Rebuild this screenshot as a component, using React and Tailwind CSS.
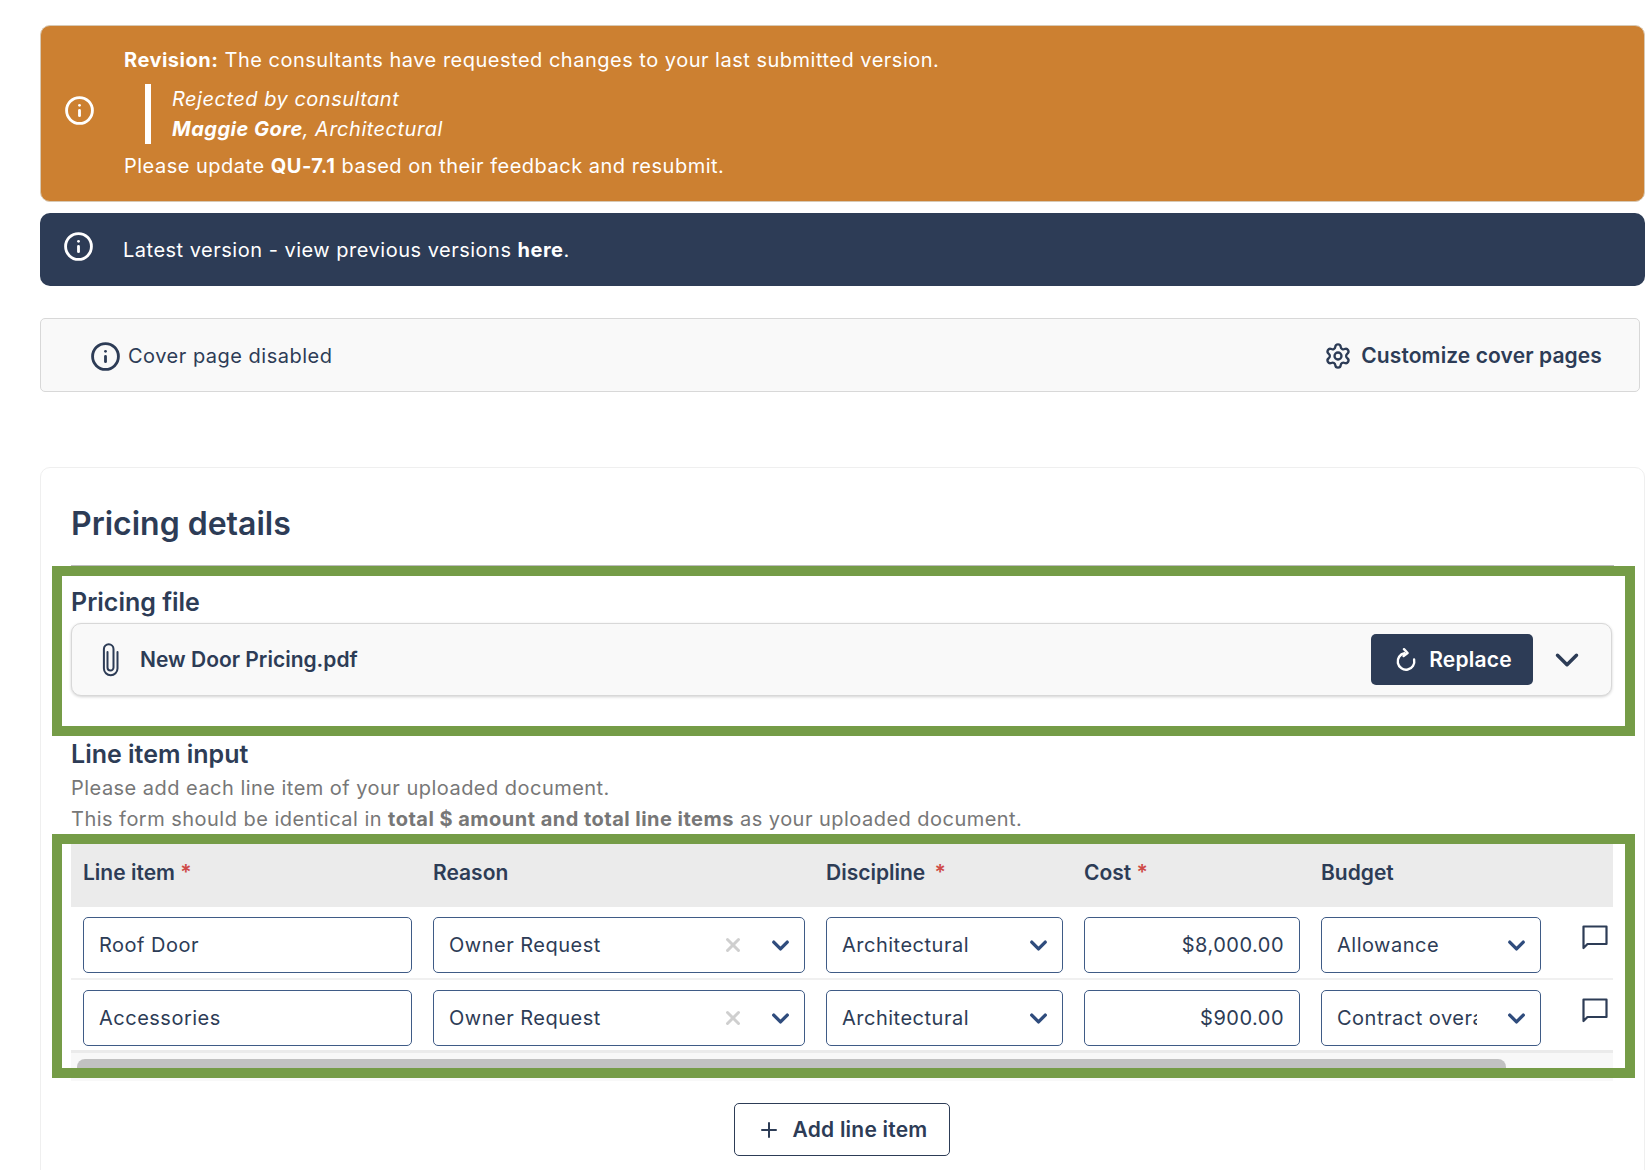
import { ChevronDown, Info, Plus, Settings, X } from "lucide-react";

const columns = "grid grid-cols-[329px_372px_237px_216px_220px_1fr] gap-x-[21px] pl-3";

const rows = [
  { item: "Roof Door", reason: "Owner Request", discipline: "Architectural", cost: "$8,000.00", budget: "Allowance" },
  { item: "Accessories", reason: "Owner Request", discipline: "Architectural", cost: "$900.00", budget: "Contract overall" },
];

const fieldClass =
  "flex h-14 items-center rounded-[5px] border border-[#3f5b86] bg-white pl-[15px] text-[20px] tracking-[0.025em] text-[#2d3c56]";

const Star = () => <span className="text-[#cf4a47]">*</span>;

const PaperClip = () => (
  <svg width="19" height="34" viewBox="0 0 19 34" fill="none" stroke="#2d3c56" strokeWidth="2" strokeLinecap="round">
    <path d="M6.5 9v15.5a3 3 0 0 0 6 0V6a4.8 4.8 0 0 0-9.6 0v19.5a6.8 6.8 0 0 0 13.6 0V9" />
  </svg>
);

const ReplaceIcon = () => (
  <svg width="22" height="24" viewBox="0 0 22 24" fill="none" stroke="#fff" strokeWidth="2.4" strokeLinecap="round" strokeLinejoin="round">
    <path d="M9.5 5.2a8.3 8.3 0 1 0 9.6 6.3" />
    <path d="M9 1.2l3.6 3.8L8.6 8" />
  </svg>
);

const CommentIcon = () => (
  <svg width="26" height="25" viewBox="0 0 26 25" fill="none" stroke="#2d3c56" strokeWidth="2.2">
    <path d="M1.5 1.5h23v17.5H5.5l-4 4z" strokeLinejoin="round" />
  </svg>
);

const Select = ({ value, clear, clip }) => (
  <div className={fieldClass}>
    <div className="grow">
      <div className={clip ? "w-[140px] overflow-hidden whitespace-nowrap" : "whitespace-nowrap"}>{value}</div>
    </div>
    {clear && <X size={22} strokeWidth={3.2} className="mr-[23px] text-[#cfcfcf]" />}
    <ChevronDown size={27} strokeWidth={3} className="mr-[10px] shrink-0 text-[#2f4c7d]" />
  </div>
);

export default function App() {
  return (
    <div className="h-[1170px] overflow-hidden bg-white pt-[25px] pl-10 font-['Inter',sans-serif] text-[#2d3c56]">
      <div className="w-[1605px]">
        <div className="flex h-[177px] items-center rounded-[10px] border border-[#d8c9b4] bg-[#cc8031] pl-[23px] text-[20px] tracking-[0.025em] text-white">
          <Info size={31} strokeWidth={2.2} className="mr-[29px] mb-[6px] shrink-0" />
          <div>
            <p className="-mt-[1px] leading-[30px]">
              <b className="font-bold">Revision:</b> The consultants have requested changes to your last submitted version.
            </p>
            <div className="mt-[9px] ml-[21px] border-l-[6px] border-white pl-[21px] italic leading-[30px]">
              <p>Rejected by consultant</p>
              <p>
                <b className="font-bold">Maggie Gore</b>, Architectural
              </p>
            </div>
            <p className="mt-[7px] leading-[30px]">
              Please update <b className="font-bold">QU-7.1</b> based on their feedback and resubmit.
            </p>
          </div>
        </div>

        <div className="mt-[11px] flex h-[73px] items-center rounded-[10px] bg-[#2d3c56] pl-[23px] text-[20px] tracking-[0.025em] text-white">
          <Info size={31} strokeWidth={2.2} className="mr-[29px] mb-[6px] shrink-0" />
          <p>
            Latest version - view previous versions <b className="font-bold">here</b>.
          </p>
        </div>

        <div className="mt-[32px] flex h-[74px] w-[1600px] items-center justify-between rounded-[5px] border border-[#d8d8d8] bg-[#f9f9f9] pt-[2px] pr-[37px] pl-[49px] text-[20px]">
          <div className="flex items-center gap-[7px] tracking-[0.025em]">
            <Info size={31} strokeWidth={2.2} />
            <span>Cover page disabled</span>
          </div>
          <div className="flex items-center gap-[9px] text-[21px] font-semibold tracking-[0.005em]">
            <Settings size={28} strokeWidth={2} />
            <span>Customize cover pages</span>
          </div>
        </div>

        <div className="relative mt-[75px] h-[800px] rounded-[10px] border border-[#efefef] px-[30px] pt-[36px]">
          <h2 className="border-b border-[#bdbdbd] pb-[21px] text-[32px] leading-[40px] font-semibold">Pricing details</h2>

          <h3 className="mt-[21px] text-[25px] leading-[30px] font-semibold">Pricing file</h3>
          <div className="mt-[6px] flex h-[73px] w-[1541px] items-center rounded-[10px] border border-[#d8d8d8] bg-[#f9f9f9] pl-[29px] shadow-[0_1px_3px_rgba(0,0,0,0.18)]">
            <PaperClip />
            <span className="ml-[20px] grow text-[21px] font-semibold">New Door Pricing.pdf</span>
            <button className="flex h-[51px] w-[162px] items-center justify-center gap-[12px] rounded-[5px] bg-[#2d3c56] pl-[3px] text-[21px] font-semibold tracking-[0.01em] text-white">
              <ReplaceIcon />
              Replace
            </button>
            <ChevronDown size={38} strokeWidth={2.2} className="mr-[25px] ml-[15px]" />
          </div>

          <h3 className="mt-[43px] text-[25px] leading-[30px] font-semibold">Line item input</h3>
          <p className="mt-[4px] text-[20px] leading-[31px] tracking-[0.0235em] text-[#777777]">
            Please add each line item of your uploaded document.
            <br />
            This form should be identical in <b className="font-bold">total $ amount and total line items</b> as your uploaded document.
          </p>

          <div className="mt-[9px] w-[1542px]">
            <div className={`${columns} h-[63px] bg-[#ebebeb] pt-[15px] text-[21px] leading-[28px] font-semibold`}>
              <div>Line item <Star /></div>
              <div>Reason</div>
              <div>Discipline <span className="ml-1"><Star /></span></div>
              <div>Cost <Star /></div>
              <div>Budget</div>
              <div />
            </div>
            {rows.map((row, i) => (
              <div
                key={row.item}
                className={`${columns} ${i === 0 ? "border-b-2 border-[#f0f0f0] pt-[10px] pb-[5px]" : "border-b-[3px] border-[#ebebeb] pt-[10px] pb-[4px]"}`}
              >
                <div className={fieldClass}>{row.item}</div>
                <Select value={row.reason} clear />
                <Select value={row.discipline} />
                <div className={`${fieldClass} justify-end pr-[15px]`}>{row.cost}</div>
                <Select value={row.budget} clip />
                <div className="pt-[8px] pl-[20px]">
                  <CommentIcon />
                </div>
              </div>
            ))}
            <div className="h-[28px] bg-[#f8f8f8] pt-[6px] pl-[6px]">
              <div className="h-[16px] w-[1429px] rounded-t-[8px] bg-[#c1c1c1]" />
            </div>
          </div>

          <button className="mt-[22px] ml-[663px] flex h-[53px] w-[216px] items-center justify-center gap-[12px] rounded-[5px] border border-[#2d3c56] text-[21px] font-semibold tracking-[0.01em]">
            <Plus size={24} strokeWidth={2} />
            Add line item
          </button>

          {/* green review boxes drawn over the form */}
          <div className="absolute top-[98px] left-[11px] h-[170px] w-[1583px] border-[10px] border-[#759c47]" />
          <div className="absolute top-[366px] left-[11px] h-[244px] w-[1583px] border-[10px] border-[#759c47]" />
        </div>
      </div>
    </div>
  );
}
